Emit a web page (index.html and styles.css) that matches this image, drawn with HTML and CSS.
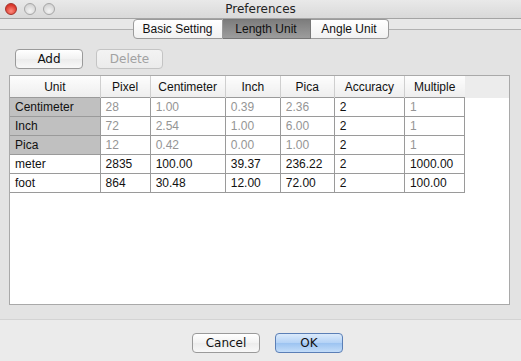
FILE: index.html
```html
<!DOCTYPE html>
<html lang="en">
<head>
    <meta charset="UTF-8" />
    <title>Preferences</title>
    <link rel="stylesheet" href="styles.css">
</head>
<body>
<div class="window">
    <div class="titlebar">
        <div class="lights">
            <span class="light close"></span>
            <span class="light"></span>
            <span class="light"></span>
        </div>
        <div class="title">Preferences</div>
    </div>

    <div class="tabstrip">
        <div class="tabs">
            <button class="tab">Basic Setting</button>
            <button class="tab selected">Length Unit</button>
            <button class="tab">Angle Unit</button>
        </div>
    </div>

    <div class="content">
        <div class="toolbar">
            <button class="btn">Add</button>
            <button class="btn" disabled>Delete</button>
        </div>
        <div class="grid-panel">
            <table class="units">
                <colgroup>
                    <col style="width: 90px">
                    <col style="width: 50px">
                    <col style="width: 75px">
                    <col style="width: 55px">
                    <col style="width: 54px">
                    <col style="width: 70px">
                    <col style="width: 60px">
                </colgroup>
                <thead>
                    <tr>
                        <th>Unit</th>
                        <th>Pixel</th>
                        <th>Centimeter</th>
                        <th>Inch</th>
                        <th>Pica</th>
                        <th>Accuracy</th>
                        <th>Multiple</th>
                    </tr>
                </thead>
                <tbody>
                    <tr class="builtin">
                        <td class="name">Centimeter</td>
                        <td>28</td><td>1.00</td><td>0.39</td><td>2.36</td>
                        <td class="acc">2</td><td>1</td>
                    </tr>
                    <tr class="builtin">
                        <td class="name">Inch</td>
                        <td>72</td><td>2.54</td><td>1.00</td><td>6.00</td>
                        <td class="acc">2</td><td>1</td>
                    </tr>
                    <tr class="builtin">
                        <td class="name">Pica</td>
                        <td>12</td><td>0.42</td><td>0.00</td><td>1.00</td>
                        <td class="acc">2</td><td>1</td>
                    </tr>
                    <tr>
                        <td>meter</td>
                        <td>2835</td><td>100.00</td><td>39.37</td><td>236.22</td>
                        <td>2</td><td>1000.00</td>
                    </tr>
                    <tr>
                        <td>foot</td>
                        <td>864</td><td>30.48</td><td>12.00</td><td>72.00</td>
                        <td>2</td><td>100.00</td>
                    </tr>
                </tbody>
            </table>
        </div>
    </div>

    <div class="footer">
        <button class="btn">Cancel</button>
        <button class="btn default">OK</button>
    </div>
</div>
</body>
</html>
```

FILE: styles.css
```css
body {
    margin: 0;
    font-family: "Liberation Sans", Arial, sans-serif;
    font-size: 12px;
    color: #111;
    background-color: #e3e3e3;
}
.window {
    width: 521px;
    height: 361px;
    display: flex;
    flex-direction: column;
    background-color: #e3e3e3;
    overflow: hidden;
}
.titlebar {
    height: 18px;
    flex-shrink: 0;
    display: flex;
    align-items: center;
    position: relative;
    background: linear-gradient(#e9e9e9, #d9d9d9);
    border-bottom: 1px solid #a4a4a4;
}
.lights {
    display: flex;
    gap: 7px;
    padding-left: 5px;
}
.light {
    width: 12px;
    height: 12px;
    border-radius: 50%;
    box-sizing: border-box;
    border: 1px solid #a6a6a6;
    background: radial-gradient(circle at 50% 70%, #f4f4f4, #c9c9c9);
}
.light.close {
    border-color: #a3322a;
    background: radial-gradient(circle at 50% 70%, #ff8c7e, #d9362a 70%);
}
.title {
    position: absolute;
    left: 0;
    right: 0;
    text-align: center;
    font-family: "DejaVu Sans", sans-serif;
    font-size: 12px;
    color: #222;
    pointer-events: none;
}
.tabstrip {
    flex-shrink: 0;
    display: flex;
    justify-content: center;
    background: linear-gradient(#e8e8e8 0 10px, #b2b2b2 10px 11px, #e3e3e3 11px);
}
.tabs {
    display: flex;
}
.tab {
    height: 20px;
    padding: 0 0;
    font-family: "Liberation Sans", Arial, sans-serif;
    font-size: 12px;
    color: #111;
    border: 1px solid #9b9b9b;
    border-left: none;
    background: linear-gradient(#ffffff, #f1f1f1);
}
.tab:nth-child(1) {
    width: 90px;
    border-left: 1px solid #9b9b9b;
    border-radius: 4px 0 0 4px;
}
.tab:nth-child(2) {
    width: 88px;
}
.tab:nth-child(3) {
    width: 78px;
    border-radius: 0 4px 4px 0;
}
.tab.selected {
    background: linear-gradient(#7d7d7d, #9d9d9d);
    border-color: #777;
}
.content {
    flex: 1;
    padding: 10px 0 14px 9px;
    border-bottom: 1px solid #d3d3d3;
}
.toolbar {
    display: flex;
    gap: 13px;
    padding-left: 6px;
    margin-bottom: 6px;
}
.btn {
    width: 68px;
    height: 20px;
    font-family: "DejaVu Sans", sans-serif;
    font-size: 12px;
    color: #111;
    border: 1px solid #9a9a9a;
    border-radius: 4px;
    background: linear-gradient(#ffffff, #f2f2f2 50%, #ececec 51%, #f8f8f8);
    padding: 0;
}
.btn:disabled {
    width: 67px;
    color: #a2a2a2;
    border-color: #c4c4c4;
    background: linear-gradient(#f3f3f3, #ebebeb);
}
.grid-panel {
    width: 499px;
    height: 228px;
    border: 1px solid #a9a9a9;
    background: linear-gradient(#ececec 0 22px, #ffffff 22px);
}
.units {
    border-collapse: collapse;
    table-layout: fixed;
    width: 455px;
}
.units th {
    height: 21px;
    padding: 0;
    font-weight: normal;
    text-align: center;
    background: linear-gradient(#fdfdfd, #eeeeee);
    border-left: 1px solid #cfcfcf;
}
.units th:first-child {
    border-left: none;
}
.units td {
    height: 18px;
    padding: 0 0 0 5px;
    border: 1px solid #9a9a9a;
    background-color: #fff;
    white-space: nowrap;
}
.units td:first-child {
    border-left: none;
}
.builtin td {
    color: #959595;
}
.builtin td.name {
    color: #111;
    background-color: #c0c0c0;
}
.builtin td.acc {
    color: #111;
}
.footer {
    height: 41px;
    flex-shrink: 0;
    display: flex;
    justify-content: center;
    align-items: flex-start;
    gap: 15px;
    padding: 13px 0 0 14px;
    box-sizing: border-box;
    background-color: #ebebeb;
}
.btn.default {
    border-color: #5b7fb6;
    background: linear-gradient(#dbeafb, #b3d2f6 50%, #9cc3f1 51%, #c3ddf9);
}
```
